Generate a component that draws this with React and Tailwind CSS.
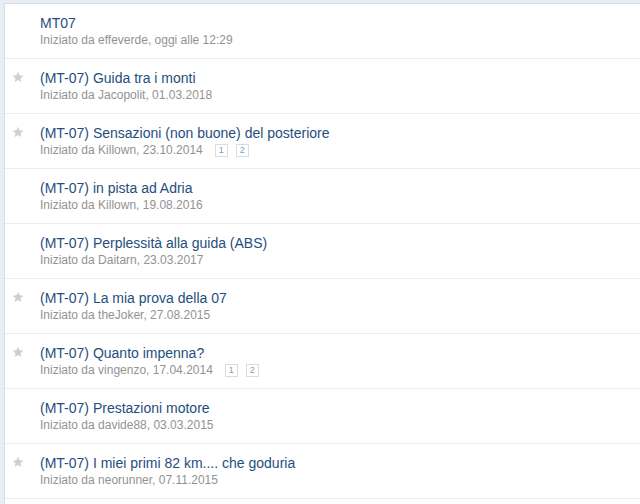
import React from 'react';

const threads = [
  { title: 'MT07', by: 'effeverde', date: 'oggi alle 12:29', star: false },
  { title: '(MT-07) Guida tra i monti', by: 'Jacopolit', date: '01.03.2018', star: true },
  { title: '(MT-07) Sensazioni (non buone) del posteriore', by: 'Killown', date: '23.10.2014', star: true, pages: 2 },
  { title: '(MT-07) in pista ad Adria', by: 'Killown', date: '19.08.2016', star: false },
  { title: '(MT-07) Perplessità alla guida (ABS)', by: 'Daitarn', date: '23.03.2017', star: false },
  { title: '(MT-07) La mia prova della 07', by: 'theJoker', date: '27.08.2015', star: true },
  { title: '(MT-07) Quanto impenna?', by: 'vingenzo', date: '17.04.2014', star: true, pages: 2 },
  { title: '(MT-07) Prestazioni motore', by: 'davide88', date: '03.03.2015', star: false },
  { title: '(MT-07) I miei primi 82 km.... che goduria', by: 'neorunner', date: '07.11.2015', star: true },
];

const Star = () => (
  <svg width="12" height="12" viewBox="0 0 24 24" className="fill-[#cfcfcf]">
    <path d="M12 1.5l3.1 7.1 7.7.7-5.8 5.1 1.7 7.6L12 18l-6.7 4 1.7-7.6-5.8-5.1 7.7-.7z" />
  </svg>
);

const ThreadRow = ({ thread }) => (
  <div className="h-[55px] border-b border-[#ececec] flex">
    <div className="w-[35px] shrink-0 flex pt-[12px] pl-[7px]">
      {thread.star && <Star />}
    </div>
    <div className="pt-[11px]">
      <div className="text-[14px] leading-[17px] text-[#1f4e7d]">{thread.title}</div>
      <div className="flex items-center text-[12px] leading-[15px] text-[#929292] mt-[1px]">
        <span>Iniziato da {thread.by}, {thread.date}</span>
        {thread.pages && (
          <span className="flex gap-[8px] ml-[12px]">
            {Array.from({ length: thread.pages }).map((_, i) => (
              <span
                key={i}
                className="w-[13px] h-[13px] border border-[#dcdcdc] text-[9px] leading-[11px] text-[#7c9fc3] flex items-center justify-center"
              >
                {i + 1}
              </span>
            ))}
          </span>
        )}
      </div>
    </div>
  </div>
);

export default function App() {
  return (
    <div
      className="w-[640px] h-[504px] overflow-hidden bg-[#e8eef3] pt-[3px] pl-[4px]"
      style={{ fontFamily: '"Liberation Sans", Arial, sans-serif' }}
    >
      <div className="bg-white border-l border-t border-[#d5dde5] h-full">
        {threads.map((t, i) => (
          <ThreadRow key={i} thread={t} />
        ))}
      </div>
    </div>
  );
}
